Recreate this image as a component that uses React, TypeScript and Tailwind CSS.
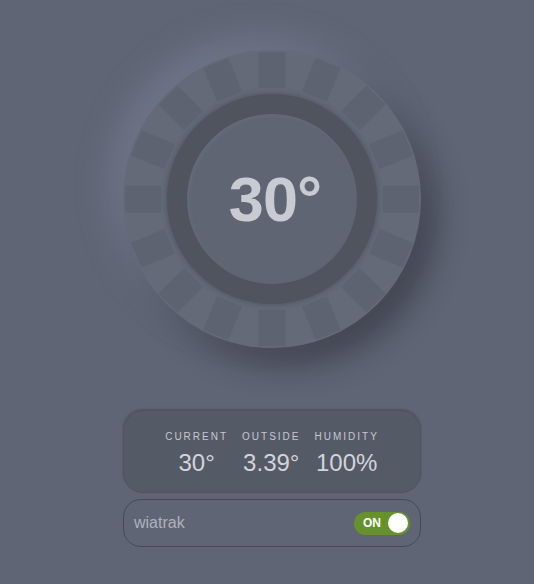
import React from 'react'

const ticks = Array.from({ length: 16 }, (_, i) => i * 22.5)

function Dial() {
  return (
    <div className="relative w-[298px] h-[298px] rounded-full bg-[#646a78] shadow-[-14px_-14px_32px_rgba(140,150,175,0.35),16px_18px_30px_rgba(30,33,42,0.45)] flex items-center justify-center">
      <svg className="absolute inset-0" width="298" height="298" viewBox="0 0 298 298">
        {ticks.map((a) => (
          <rect
            key={a}
            x={135.5}
            y={2}
            width={27}
            height={36}
            fill="#5a606d"
            opacity={0.65}
            transform={`rotate(${a} 149 149)`}
          />
        ))}
      </svg>
      <div className="relative w-[210px] h-[210px] rounded-full bg-[#50545f] flex items-center justify-center shadow-[0_0_6px_rgba(30,33,42,0.35)]">
        <div className="w-[170px] h-[170px] rounded-full bg-[#5f6573] flex items-center justify-center shadow-[inset_2px_2px_4px_rgba(120,128,145,0.25)]">
          <span className="font-['Liberation_Sans',Arial,sans-serif] font-bold text-[63px] leading-none text-[#c9cbd3] tracking-[-1px] pl-[6px]">
            30°
          </span>
        </div>
      </div>
    </div>
  )
}

function Stat({ label, value }: { label: string; value: string }) {
  return (
    <div className="flex flex-col items-center">
      <span className="text-[10px] tracking-[2px] text-[#c5c8d0] leading-none">{label}</span>
      <span className="text-[24px] leading-none mt-[9px] text-[#d2d4db] font-light">{value}</span>
    </div>
  )
}

export default function App() {
  return (
    <div className="w-[534px] h-[584px] bg-[#5f6574] font-['Liberation_Sans',Arial,sans-serif] overflow-hidden">
      <div className="ml-[123px] w-[298px] pt-[50px] flex flex-col">
        <Dial />
        <div className="mt-[62px] h-[83px] rounded-[20px] bg-[#555a67] border border-[#50545f] shadow-[0_-1px_2px_rgba(40,44,55,0.3)] flex items-start justify-center gap-[14px] pt-[21px]">
          <Stat label="CURRENT" value="30°" />
          <Stat label="OUTSIDE" value="3.39°" />
          <Stat label="HUMIDITY" value="100%" />
        </div>
        <div className="mt-[6px] h-[48px] rounded-[18px] border border-[#454a56] flex items-center justify-between pl-[10px] pr-[10px]">
          <span className="text-[16px] text-[#aeb2bb]">wiatrak</span>
          <div className="w-[56px] h-[23px] rounded-full bg-[#67912c] flex items-center justify-between pl-[9px] pr-[2px]">
            <span className="text-[12px] font-bold text-white">ON</span>
            <span className="w-[20px] h-[20px] rounded-full bg-white"></span>
          </div>
        </div>
      </div>
    </div>
  )
}
